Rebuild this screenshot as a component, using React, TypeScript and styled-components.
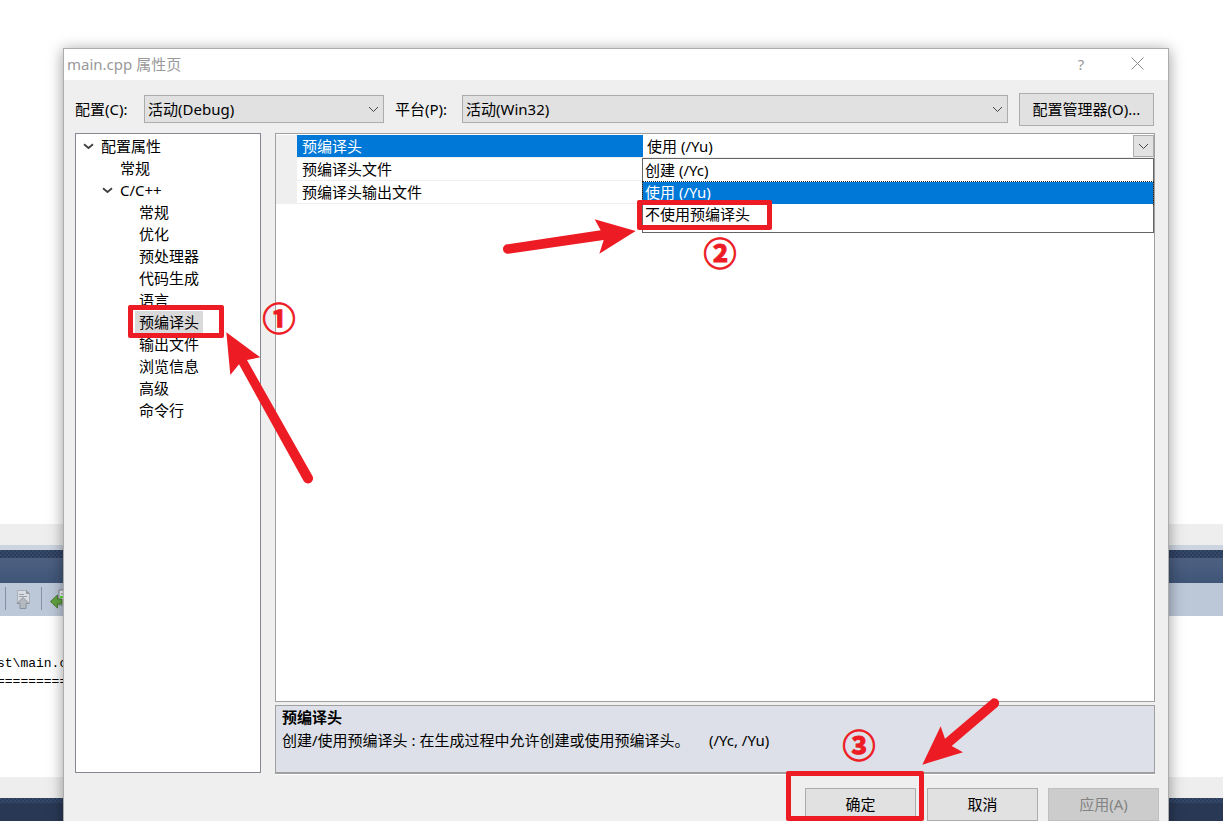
import React from "react";
import styled, { createGlobalStyle } from "styled-components";

const RED = "#ed1c24";

const GlobalStyle = createGlobalStyle`
  *, *::before, *::after { box-sizing: border-box; }
  body {
    margin: 0;
    background: #fff;
    color: #000;
    font: 15px/20px "Noto Sans", "Noto Sans CJK SC", sans-serif;
  }
  button, select { font: inherit; color: inherit; }
`;

/* ---------- editor window behind the dialog ---------- */

const Desktop = styled.div`
  position: relative;
  display: flex;
  flex-direction: column;
  min-height: 100vh;
  overflow: hidden;
`;

const EditorArea = styled.div`
  flex: 1;
  background: #fff;
`;

const Band = styled.div<{ $height: number; $color: string }>`
  flex: none;
  height: ${(p) => p.$height}px;
  background: ${(p) => p.$color};
`;

const DottedBand = styled.div<{ $height: number }>`
  flex: none;
  height: ${(p) => p.$height}px;
  background:
    radial-gradient(circle at 1px 1px, #35496b 1px, transparent 1px) 0 0 / 4px 4px,
    radial-gradient(circle at 3px 3px, #35496b 1px, transparent 1px) 0 0 / 4px 4px,
    #2c3d5b;
`;

const PaneTitle = styled.div`
  flex: none;
  height: 25px;
  background: linear-gradient(#4d6082, #3f5578);
`;

const PaneToolbar = styled.div`
  display: flex;
  flex: none;
  align-items: center;
  height: 33px;
  padding: 0 0 2px 5px;
  background: #bcc7d8;
`;

const Separator = styled.span`
  width: 1px;
  height: 23px;
  background: #8591a2;
`;

const ToolButton = styled.button`
  display: flex;
  justify-content: center;
  width: 35px;
  padding: 0;
  border: 0;
  background: none;
`;

const Output = styled.pre`
  flex: none;
  height: 161px;
  margin: 0 0 0 -3px;
  padding-top: 39px;
  background: #fff;
  font: 13px/18px "Liberation Mono", monospace;
`;

/* ---------- dialog frame ---------- */

const Dialog = styled.section`
  position: absolute;
  inset: 48px 54px -12px 63px;
  display: flex;
  flex-direction: column;
  border: 1px solid #acacac;
  background: #efefef;
  box-shadow: 0 2px 14px rgba(0, 0, 0, 0.4);
`;

const TitleBar = styled.header`
  display: flex;
  flex: none;
  align-items: center;
  height: 31px;
  padding: 0 18px 0 3px;
  background: #fff;
  color: #999;
`;

const Title = styled.h1`
  flex: 1;
  margin: 0;
  padding-bottom: 2px;
  font-size: 15px;
  font-weight: 400;
`;

const CaptionButton = styled.button`
  display: flex;
  align-items: center;
  justify-content: center;
  width: 26px;
  height: 28px;
  margin-left: 30px;
  padding: 0 0 2px;
  border: 0;
  background: none;
`;

const Content = styled.div`
  display: flex;
  flex: 1;
  flex-direction: column;
  padding: 13px 13px 0 11px;
`;

const ConfigRow = styled.div`
  display: flex;
  height: 33px;
  margin-bottom: 7px;
  padding-right: 1px;
`;

const FieldLabel = styled.label<{ $width: number }>`
  flex: none;
  width: ${(p) => p.$width}px;
  padding-top: 6px;
`;

const SelectBox = styled.div<{ $width?: number }>`
  position: relative;
  display: flex;
  flex: ${(p) => (p.$width ? `0 0 ${p.$width}px` : "1")};
  align-items: center;
  height: 28px;
  margin: 2px 11px 0 0;
  border: 1px solid #acacac;
  background: #e1e1e1;
`;

const SelectInput = styled.select`
  flex: 1;
  height: 100%;
  padding: 0 24px 0 3px;
  border: 0;
  outline: 0;
  appearance: none;
  background: transparent;
`;

const SelectArrow = styled.span`
  position: absolute;
  right: 4px;
  display: flex;
  pointer-events: none;
`;

const PushButton = styled.button<{ $width: number }>`
  flex: none;
  width: ${(p) => p.$width}px;
  height: 33px;
  padding: 0 0 2px;
  border: 1px solid #acacac;
  background: #e1e1e1;
  &:disabled {
    border-color: #bfbfbf;
    background: #ccc;
    color: #838383;
  }
`;

const Panels = styled.div`
  display: flex;
  flex: 1;
  gap: 14px;
`;

/* ---------- tree ---------- */

const Tree = styled.ul`
  flex: 0 0 186px;
  margin: 0 0 2px;
  padding: 1px 0 0;
  border: 1px solid #828790;
  background: #fff;
  list-style: none;
`;

const TreeRow = styled.li<{ $level: number }>`
  display: flex;
  height: 22px;
  padding-left: ${(p) => p.$level * 19}px;
`;

const TreeToggle = styled.span`
  display: flex;
  align-items: center;
  width: 21px;
  padding-left: 7px;
`;

const TreeAnchor = styled.div`
  position: relative;
`;

const TreeLabel = styled.button<{ $selected?: boolean }>`
  display: block;
  height: 22px;
  padding: 0 4px;
  border: 0;
  background: ${(p) => (p.$selected ? "#d9d9d9" : "none")};
`;

/* ---------- property grid ---------- */

const GridColumn = styled.div`
  display: flex;
  flex: 1;
  flex-direction: column;
  min-width: 0;
`;

const GridPane = styled.div`
  flex: 1;
  margin-bottom: 3px;
  padding-top: 1px;
  border: 1px solid #a0a0a0;
  background: #fff;
`;

const PropertyTable = styled.table`
  width: 100%;
  border-spacing: 0;
  table-layout: fixed;
`;

const Gutter = styled.td`
  width: 21px;
  padding: 0;
  background: #efefef;
`;

const NameCell = styled.th<{ $selected?: boolean }>`
  width: 346px;
  height: 23px;
  padding: 0 5px;
  border-bottom: 1px solid #eee;
  background: ${(p) => (p.$selected ? "#0078d7" : "#fff")};
  color: ${(p) => (p.$selected ? "#fff" : "#000")};
  font-weight: 400;
  text-align: left;
`;

const ValueCell = styled.td`
  padding: 0;
  border-bottom: 1px solid #eee;
`;

const ValueEditor = styled.div`
  position: relative;
  display: flex;
  height: 22px;
  padding-left: 1px;
`;

const DropButton = styled.span`
  position: absolute;
  right: 0;
  display: flex;
  align-items: center;
  justify-content: center;
  width: 21px;
  height: 22px;
  border: 1px solid #acacac;
  background: #e1e1e1;
  pointer-events: none;
`;

const Popup = styled.ul`
  position: absolute;
  z-index: 1;
  top: 23px;
  right: 0;
  left: -1px;
  margin: 0;
  padding: 1px 0 6px;
  border: 1px solid #646464;
  background: #fff;
  list-style: none;
`;

const Option = styled.li<{ $selected?: boolean }>`
  position: relative;
  height: 22px;
  padding: 0 2px;
  background: ${(p) => (p.$selected ? "#0078d7" : "#fff")};
  color: ${(p) => (p.$selected ? "#fff" : "#000")};
  ${(p) => p.$selected && "outline: 1px dotted #222;"}
`;

const Description = styled.div`
  flex: none;
  height: 69px;
  margin-bottom: 1px;
  padding: 1px 6px;
  border: 1px solid #a0a0a0;
  border-bottom-width: 2px;
  background: #dde0e8;
  box-shadow: 0 1px 0 #fff;
`;

const DescriptionTitle = styled.h2`
  margin: 0;
  font-size: 15px;
  font-weight: 700;
`;

const DescriptionText = styled.p`
  margin: 3px 0 0;
  white-space: pre;
`;

const Footer = styled.footer`
  display: flex;
  flex: none;
  justify-content: flex-end;
  gap: 10px;
  padding: 13px 9px 11px;
`;

const OkAnchor = styled.div`
  position: relative;
  margin-right: 1px;
`;

/* ---------- red step marks ---------- */

interface Place {
  $x: number;
  $y: number;
}

const Frame = styled.span<Place & { $w: number; $h: number }>`
  position: absolute;
  z-index: 2;
  left: ${(p) => p.$x}px;
  top: ${(p) => p.$y}px;
  width: ${(p) => p.$w}px;
  height: ${(p) => p.$h}px;
  border: 5px solid ${RED};
  border-radius: 2px;
  pointer-events: none;
`;

const ArrowSvg = styled.svg<Place>`
  position: absolute;
  z-index: 3;
  left: ${(p) => p.$x}px;
  top: ${(p) => p.$y}px;
  fill: ${RED};
  pointer-events: none;
`;

const StepNumber = styled.span<Place>`
  position: absolute;
  z-index: 3;
  left: ${(p) => p.$x}px;
  top: ${(p) => p.$y}px;
  display: flex;
  align-items: center;
  justify-content: center;
  width: 36px;
  height: 36px;
  color: ${RED};
  font: 700 33px/36px "Noto Sans CJK SC", sans-serif;
  -webkit-text-stroke: 1px ${RED};
  pointer-events: none;
`;

/* ---------- icons ---------- */

const Chevron = () => (
  <svg width="11" height="7" viewBox="0 0 11 7" fill="none" stroke="#444" aria-hidden="true">
    <path d="M1 1 5.500 5.500 10 1" />
  </svg>
);

const TreeChevron = () => (
  <svg width="11" height="7" viewBox="0 0 11 7" fill="none" stroke="#404040" strokeWidth="1.800" aria-hidden="true">
    <path d="M1 1.300 5.500 5 10 1.300" />
  </svg>
);

const PageUpIcon = () => (
  <svg width="18" height="20" viewBox="0 0 18 20" aria-hidden="true">
    <path d="M2.500 1.500h9l3 3v10h-12z" fill="#d9dde3" stroke="#a9b0ba" />
    <path d="M11.500 1.500v3h3" fill="#8f969f" stroke="#8f969f" />
    <path d="M4 5.500h5M4 7.500h8" stroke="#9aa3ae" />
    <path d="M8 8.500l6 6h-3v5H5v-5H2z" fill="#b4bac1" stroke="#8b929a" />
  </svg>
);

const PageBackIcon = () => (
  <svg width="20" height="20" viewBox="0 0 20 20" aria-hidden="true">
    <path d="M9 1h10v15H9z" fill="#f5f7f9" stroke="#7d8794" />
    <path d="M11 5h8" stroke="#8d99a8" />
    <path d="M10 8h9" stroke="#63e63c" strokeWidth="2" />
    <path d="M13 14h7" stroke="#34486b" strokeWidth="2" />
    <path d="M.500 12.500l7-6.500v4h4.500v5H7.500v4z" fill="#62a341" stroke="#47782f" />
  </svg>
);

/* ---------- data ---------- */

interface TreeNode {
  label: string;
  level: number;
  open?: boolean;
  selected?: boolean;
}

const nodes: TreeNode[] = [
  { label: "配置属性", level: 0, open: true },
  { label: "常规", level: 1 },
  { label: "C/C++", level: 1, open: true },
  { label: "常规", level: 2 },
  { label: "优化", level: 2 },
  { label: "预处理器", level: 2 },
  { label: "代码生成", level: 2 },
  { label: "语言", level: 2 },
  { label: "预编译头", level: 2, selected: true },
  { label: "输出文件", level: 2 },
  { label: "浏览信息", level: 2 },
  { label: "高级", level: 2 },
  { label: "命令行", level: 2 },
];

export default function App() {
  return (
    <>
      <GlobalStyle />
      <Desktop>
        <EditorArea />
        <Band $height={21} $color="#eee" />
        <Band $height={5} $color="#ccd4e0" />
        <DottedBand $height={8} />
        <PaneTitle />
        <PaneToolbar>
          <Separator />
          <ToolButton aria-label="上一条消息">
            <PageUpIcon />
          </ToolButton>
          <Separator />
          <ToolButton aria-label="转到位置">
            <PageBackIcon />
          </ToolButton>
        </PaneToolbar>
        <Output>{"st\\main.cpp\n==========="}</Output>
        <Band $height={21} $color="#eee" />
        <DottedBand $height={5} />
        <Band $height={18} $color="#293955" />

        <Dialog role="dialog" aria-labelledby="dialog-title">
          <TitleBar>
            <Title id="dialog-title">main.cpp 属性页</Title>
            <CaptionButton aria-label="帮助">?</CaptionButton>
            <CaptionButton aria-label="关闭">
              <svg width="13" height="13" viewBox="0 0 13 13" stroke="#8c8c8c" aria-hidden="true">
                <path d="M.5.5l12 12M12.500.5l-12 12" />
              </svg>
            </CaptionButton>
          </TitleBar>

          <Content>
            <ConfigRow>
              <FieldLabel $width={69} htmlFor="configuration">配置(C):</FieldLabel>
              <SelectBox $width={240}>
                <SelectInput id="configuration">
                  <option>活动(Debug)</option>
                </SelectInput>
                <SelectArrow>
                  <Chevron />
                </SelectArrow>
              </SelectBox>
              <FieldLabel $width={67} htmlFor="platform">平台(P):</FieldLabel>
              <SelectBox>
                <SelectInput id="platform">
                  <option>活动(Win32)</option>
                </SelectInput>
                <SelectArrow>
                  <Chevron />
                </SelectArrow>
              </SelectBox>
              <PushButton $width={135}>配置管理器(O)...</PushButton>
            </ConfigRow>

            <Panels>
              <Tree>
                {nodes.map((node, i) => (
                  <TreeRow key={i} $level={node.level}>
                    <TreeToggle>{node.open && <TreeChevron />}</TreeToggle>
                    <TreeAnchor>
                      <TreeLabel $selected={node.selected}>{node.label}</TreeLabel>
                      {node.selected && (
                        <>
                          <Frame $x={-7} $y={-6} $w={96} $h={33} />
                          <StepNumber $x={126} $y={-12}>①</StepNumber>
                          <ArrowSvg $x={90} $y={19} width="90" height="155" viewBox="465 150 270 465" aria-hidden="true">
                            <path d="M469 157 571 232 531 240 727 587A15 15 0 0 1 701 603L507 253 481 285Z" />
                          </ArrowSvg>
                        </>
                      )}
                    </TreeAnchor>
                  </TreeRow>
                ))}
              </Tree>

              <GridColumn>
                <GridPane>
                  <PropertyTable>
                    <tbody>
                      <tr>
                        <Gutter />
                        <NameCell scope="row" $selected>
                          <label htmlFor="precompiled">预编译头</label>
                        </NameCell>
                        <ValueCell>
                          <ValueEditor>
                            <SelectInput id="precompiled">
                              <option>使用 (/Yu)</option>
                            </SelectInput>
                            <DropButton>
                              <Chevron />
                            </DropButton>
                            <Popup role="listbox" aria-label="预编译头">
                              <Option role="option">创建 (/Yc)</Option>
                              <Option role="option" aria-selected $selected>
                                使用 (/Yu)
                              </Option>
                              <Option role="option">
                                不使用预编译头
                                <Frame $x={-6} $y={-4} $w={135} $h={30} />
                                <StepNumber $x={59} $y={30}>②</StepNumber>
                                <ArrowSvg $x={-142} $y={13} width="136" height="40" viewBox="33 201 408 120" aria-hidden="true">
                                  <path d="M437 243 314 208 332 241 51 283A14 14 0 0 0 55 311L341 270 328 311Z" />
                                </ArrowSvg>
                              </Option>
                            </Popup>
                          </ValueEditor>
                        </ValueCell>
                      </tr>
                      <tr>
                        <Gutter />
                        <NameCell scope="row">预编译头文件</NameCell>
                        <ValueCell />
                      </tr>
                      <tr>
                        <Gutter />
                        <NameCell scope="row">预编译头输出文件</NameCell>
                        <ValueCell />
                      </tr>
                    </tbody>
                  </PropertyTable>
                </GridPane>
                <Description>
                  <DescriptionTitle>预编译头</DescriptionTitle>
                  <DescriptionText>{"创建/使用预编译头 : 在生成过程中允许创建或使用预编译头。     (/Yc, /Yu)"}</DescriptionText>
                </Description>
              </GridColumn>
            </Panels>
          </Content>

          <Footer>
            <OkAnchor>
              <PushButton $width={111}>确定</PushButton>
              <Frame $x={-19} $y={-17} $w={138} $h={50} />
              <StepNumber $x={36} $y={-62}>③</StepNumber>
              <ArrowSvg $x={116} $y={-93} width="80" height="72" viewBox="453 45 240 216" aria-hidden="true">
                <path d="M457 254 512 139 525 176 663 59A14 14 0 0 1 683 80L545 198 579 217Z" />
              </ArrowSvg>
            </OkAnchor>
            <PushButton $width={111}>取消</PushButton>
            <PushButton $width={111} disabled>
              应用(A)
            </PushButton>
          </Footer>
        </Dialog>
      </Desktop>
    </>
  );
}
